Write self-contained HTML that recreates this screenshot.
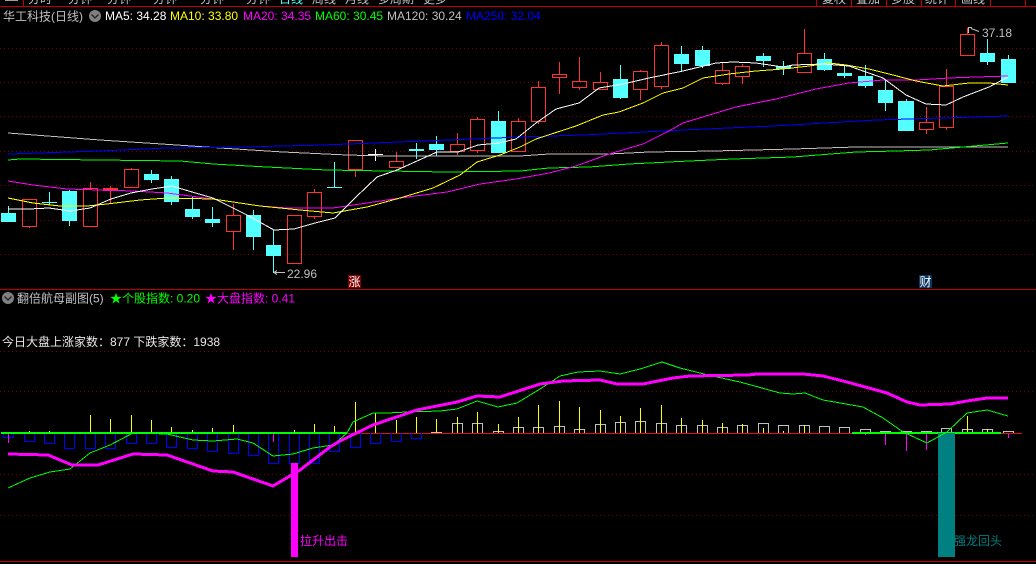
<!DOCTYPE html>
<html lang="zh">
<head>
<meta charset="utf-8">
<title>华工科技</title>
<style>
html,body{margin:0;padding:0;background:#000;width:1036px;height:564px;overflow:hidden}
svg{display:block;position:absolute;left:0;top:0}
text{font-family:"Liberation Sans","WenQuanYi Zen Hei","Noto Sans CJK SC",sans-serif;font-size:12px}
.l{fill:none;shape-rendering:crispEdges}
</style>
</head>
<body>
<svg width="1036" height="564" viewBox="0 0 1036 564" xmlns="http://www.w3.org/2000/svg">
<rect width="1036" height="564" fill="#000"/>

<!-- top tab strip -->
<g fill="#c0c0c0">
<text x="28" y="3">分时</text>
<text x="68" y="3">分钟</text>
<text x="107" y="3">分钟</text>
<text x="153" y="3">分钟</text>
<text x="200" y="3">分钟</text>
<text x="246" y="3">分钟</text>
<text x="279" y="3" fill="#54ffff">日线</text>
<text x="312" y="3">周线</text>
<text x="345" y="3">月线</text>
<text x="378" y="3">多周期</text>
<text x="423" y="3">更多</text>
<text x="822" y="3">复权</text>
<text x="856" y="3">叠加</text>
<text x="891" y="3">多股</text>
<text x="925" y="3">统计</text>
<text x="961" y="3">画线</text>
</g>
<rect x="5" y="0" width="13" height="1" fill="#a0a0a0"/>
<g fill="#c00000">
<rect x="0" y="6" width="1036" height="1"/>
<rect x="23" y="0" width="1" height="6"/>
<rect x="816" y="0" width="1" height="6"/>
<rect x="851" y="0" width="1" height="6"/>
<rect x="886" y="0" width="1" height="6"/>
<rect x="921" y="0" width="1" height="6"/>
<rect x="955" y="0" width="1" height="6"/>
<rect x="990" y="0" width="1" height="6"/>
<rect x="1025" y="0" width="1" height="6"/>
<rect x="0" y="289" width="1036" height="1"/>
<rect x="0" y="561" width="1036" height="1"/>
</g>

<!-- dotted grid -->
<path class="l" stroke="#780000" stroke-dasharray="1 3" d="M0 48.5H1036M0 82.5H1036M0 116.5H1036M0 151.5H1036M0 185.5H1036M0 220.5H1036M0 254.5H1036M0 351.5H1036M0 391.5H1036M0 474.5H1036M0 515.5H1036"/>

<!-- header text -->
<text x="3" y="20.500" fill="#c0c0c0">华工科技(日线)</text>
<circle cx="95" cy="16" r="6" fill="#808080"/>
<path d="M91.500 14.500L95 18L98.500 14.500" fill="none" stroke="#222" stroke-width="1.300"/>
<text x="105" y="20" fill="#ffffff">MA5: 34.28</text>
<text x="170" y="20" fill="#ffff00">MA10: 33.80</text>
<text x="243" y="20" fill="#ff00ff">MA20: 34.35</text>
<text x="315" y="20" fill="#00ff00">MA60: 30.45</text>
<text x="387" y="20" fill="#c0c0c0">MA120: 30.24</text>
<text x="466" y="20" fill="#0000ff">MA250: 32.04</text>

<!-- red candles -->
<path class="l" stroke="#ff3232" d="M22.5 199.5h14v27h-14zM29.5 227V228M83.5 188.5h14v38h-14zM90.5 182V188M110.5 186V204M124.5 169.5h14v18h-14zM131.5 168V169M226.5 215.5h14v16h-14zM233.5 204V215M233.5 232V250M287.5 215.5h14v48h-14zM307.5 192.5h14v24h-14zM314.5 189V192M314.5 217V219M348.5 140.5h14v29h-14zM355.5 170V177M389.5 161.5h14v6h-14zM396.5 152V161M450.5 144.5h14v7h-14zM457.5 133V144M457.5 152V155M470.5 119.5h14v31h-14zM477.5 117V119M477.5 151V153M511.5 121.5h14v30h-14zM518.5 118V121M531.5 87.5h14v34h-14zM538.5 81V87M538.5 122V124M552.5 74.5h14v3h-14zM559.5 62V74M559.5 78V94M572.5 81.5h14v6h-14zM579.5 57V81M579.5 88V90M593.5 82.5h14v7h-14zM600.5 72V82M633.5 71.5h14v18h-14zM640.5 70V71M640.5 90V100M654.5 45.5h14v41h-14zM661.5 42V45M661.5 87V89M715.5 70.5h14v13h-14zM722.5 62V70M722.5 84V85M735.5 66.5h14v10h-14zM742.5 64V66M742.5 77V84M797.5 53.5h14v19h-14zM804.5 29V53M919.5 122.5h14v7h-14zM926.5 107V122M926.5 130V134M939.5 86.5h14v41h-14zM946.5 69V86M946.5 128V130M960.5 34.5h14v21h-14zM967.5 28V34"/>
<rect x="103" y="188" width="15" height="3" fill="#ff3232"/>

<!-- cyan candles -->
<path class="l" stroke="#54ffff" d="M8.5 206V213M49.5 192V205M69.5 190V226M171.5 176V205M151.5 170V183M192.5 196V219M212.5 207V227M253.5 210V250M273.5 230V273M334.5 162V187M416.5 143V159M436.5 136V156M498.5 111V153M620.5 65V99M681.5 46V71M702.5 46V68M763.5 53V67M783.5 61V75M824.5 53V71M844.5 65V78M865.5 65V88M885.5 80V111M906.5 99V131M987.5 39V65M1008.5 55V83"/>
<path fill="#54ffff" d="M1 213h15v9h-15zM42 202h15v1h-15zM62 191h15v30h-15zM144 174h15v6h-15zM164 179h15v23h-15zM185 209h15v8h-15zM205 219h15v4h-15zM246 215h15v22h-15zM266 245h15v11h-15zM327 187h15v1h-15zM409 149h15v2h-15zM429 144h15v6h-15zM491 121h15v32h-15zM613 79h15v19h-15zM674 54h15v10h-15zM695 50h15v16h-15zM756 56h15v5h-15zM776 66h15v3h-15zM817 59h15v11h-15zM837 73h15v3h-15zM858 76h15v10h-15zM878 90h15v13h-15zM898 101h16v30h-16zM980 53h15v9h-15zM1001 59h15v24h-15z"/>
<path class="l" stroke="#ffffff" d="M368 154.5h15M375.5 149V161"/>

<!-- MA lines -->
<polyline class="l" stroke="#c0c0c0" points="8,133 100,140 177,145 220,148 283,152 347,155 387,156 520,156 549,154 609,154 649,152 713,151 793,149 856,147 1008,147"/>
<polyline class="l" stroke="#0000ff" points="8,154 100,151 167,148 243,147 323,145 400,142 520,137 583,135 683,130 773,126 876,120 943,118 1008,116"/>
<polyline class="l" stroke="#00ff00" points="8,160 20,159 180,161 213,164 267,167 327,170 447,172 520,171 549,168 589,167 629,164 689,161 733,159 793,157 856,152 896,151 929,150 963,147 1008,143"/>
<polyline class="l" stroke="#ff00ff" points="8,181 33,185 67,189 133,191 167,193 213,199 260,206 287,208 333,208 367,203 400,198 447,192 480,184 516,179 549,173 576,166 609,154 643,144 669,131 683,123 706,116 736,107 776,99 816,89 849,83 883,80 916,80 949,78 976,77 1008,76"/>
<polyline class="l" stroke="#ffff00" points="8,198 33,203 60,206 87,206 107,204 140,200 167,198 213,199 260,206 300,210 333,213 367,207 400,198 433,188 460,175 477,162 500,155 520,147 536,139 576,126 603,115 619,112 643,103 663,93 683,88 703,78 729,74 756,71 783,69 809,66 829,63 846,65 869,69 893,75 916,81 943,86 969,83 989,83 1008,85"/>
<polyline class="l" stroke="#ffffff" points="8,209 29,209 49,208 70,211 90,208 111,199 131,193 152,189 172,186 192,192 213,198 233,208 247,215 274,230 294,229 315,223 335,218 356,197 377,177 397,170 417,161 437,152 458,152 478,145 499,143 516,139 536,123 556,109 579,103 599,88 623,84 649,78 683,71 716,63 733,62 756,63 783,67 793,65 823,64 849,66 863,71 883,78 906,95 926,104 946,105 963,97 989,87 1008,77"/>

<!-- price labels -->
<path class="l" stroke="#c0c0c0" d="M274 272.5H285M274 272.5l3-2M274 272.5l3 2"/>
<text x="287" y="278" fill="#c0c0c0">22.96</text>
<path d="M968 27.500h4M968.500 27v6M971 28.500L979 31.500" fill="none" stroke="#c0c0c0"/>
<text x="982" y="37" fill="#c0c0c0">37.18</text>

<!-- event marks -->
<rect x="348" y="275" width="13" height="13" fill="#800000"/>
<text x="348.500" y="286" fill="#fff">涨</text>
<rect x="919" y="275" width="13" height="13" fill="#0a3560"/>
<text x="919.500" y="286" fill="#fff">财</text>

<!-- lower panel header -->
<circle cx="8" cy="298" r="6" fill="#808080"/>
<path d="M4.500 296.500L8 300L11.500 296.500" fill="none" stroke="#222" stroke-width="1.300"/>
<text x="17" y="302.500" fill="#c0c0c0">翻倍航母副图(5)</text>
<text x="110" y="302.500" fill="#00ff00">★个股指数: 0.20</text>
<text x="205" y="302.500" fill="#ff00ff">★大盘指数: 0.41</text>
<text x="2" y="346" fill="#e8e8e8">今日大盘上涨家数：877 下跌家数：1938</text>

<!-- zero line -->
<rect x="347" y="433" width="675" height="1" fill="#e01010"/>

<!-- blue boxes -->
<path class="l" stroke="#0000ff" d="M3.500 433V437.500H13.500V433M24.500 433V441.500H34.500V433M44.500 433V443.500H54.500V433M64.500 433V448.500H74.500V433M85.500 433V448.500H95.500V433M105.500 433V448.500H115.500V433M126.500 433V443.500H136.500V433M146.500 433V443.500H156.500V433M166.500 433V447.500H176.500V433M187.500 433V448.500H197.500V433M207.500 433V451.500H217.500V433M228.500 433V453.500H238.500V433M248.500 433V455.500H258.500V433M268.500 433V463.500H278.500V433M289.500 433V463.500H299.500V433M309.500 433V463.500H319.500V433M329.500 433V451.500H339.500V433M350.500 433V447.500H360.500V433M370.500 433V443.500H380.500V433M391.500 433V441.500H401.500V433M411.500 433V438.500H421.500V433"/>

<!-- gray boxes -->
<path class="l" stroke="#c0c0c0" d="M431.500 433V432.500H441.500V433M452.500 433V423.500H462.500V433M472.500 433V423.500H482.500V433M493.500 433V431.500H503.500V433M513.500 433V427.500H523.500V433M533.500 433V427.500H543.500V433M554.500 433V426.500H564.500V433M574.500 433V429.500H584.500V433M595.500 433V424.500H605.500V433M615.500 433V422.500H625.500V433M635.500 433V421.500H645.500V433M656.500 433V423.500H666.500V433M676.500 433V425.500H686.500V433M697.500 433V425.500H707.500V433M717.500 433V427.500H727.500V433M737.500 433V425.500H747.500V433M758.500 433V423.500H768.500V433M778.500 433V425.500H788.500V433M799.500 433V425.500H809.500V433M819.500 433V426.500H829.500V433M839.500 433V427.500H849.500V433M860.500 433V429.500H870.500V433M880.500 433V431.500H890.500V433M901.500 433V431.500H911.500V433M921.500 433V431.500H931.500V433M941.500 433V428.500H951.500V433M962.500 433V429.500H972.500V433M982.500 433V429.500H992.500V433M1003.500 433V431.500H1013.500V433"/>

<!-- yellow spikes -->
<path class="l" stroke="#ffff00" d="M29.500 431V433M49.500 431V433M90.500 415V433M110.500 419V433M131.500 415V433M151.500 420V433M171.500 427V433M192.500 430V433M212.500 428V433M233.500 425V433M294.500 430V433M314.500 424V433M334.500 426V433M355.500 402V433M375.500 413V433M396.500 420V433M416.500 417V433M436.500 419V433M457.500 417V433M477.500 412V433M498.500 424V433M518.500 417V433M538.500 405V433M559.500 401V433M579.500 407V433M600.500 410V433M620.500 416V433M640.500 408V433M661.500 405V433M681.500 418V433M702.500 420V433M722.500 423V433M742.500 424V433M763.500 428V433M783.500 431V433M804.500 425V433M967.500 416V433M987.500 429V433"/>

<!-- magenta spikes -->
<path class="l" stroke="#ff00ff" d="M8.500 434V443M273.500 434V442M865.500 434V435M885.500 434V445M906.500 434V451M926.500 434V450M1008.500 434V438"/>

<!-- green thick zero -->
<rect x="1" y="432" width="346" height="2" fill="#00ff00"/>
<rect x="852" y="432" width="149" height="2" fill="#00ff00"/>

<!-- signal bars -->
<rect x="938" y="433" width="17" height="124" fill="#008080"/>
<rect x="291" y="463" width="7" height="94" fill="#ff00ff"/>
<text x="300" y="545" fill="#ff00ff">拉升出击</text>
<text x="954" y="545" fill="#008080">强龙回头</text>

<!-- oscillator lines -->
<polyline class="l" stroke="#00ff00" points="8,488 30,478 50,472 70,469 90,453 110,445 133,433 167,434 193,440 213,441 237,439 253,443 273,456 293,454 313,448 333,445 347,433 353,422 373,413 387,413 407,412 440,411 457,409 477,401 498,407 517,403 540,389 560,376 578,372 600,371 620,374 640,369 662,362 680,368 708,375 740,382 780,393 793,394 805,393 823,400 863,407 883,418 903,432 927,443 947,432 967,413 987,410 1008,416"/>
<polyline class="l" stroke="#ff00ff" stroke-width="3" points="8,454 48,455 72,465 98,465 133,454 167,455 213,471 233,472 273,486 300,470 330,447 340,441 373,425 417,410 457,402 477,396 500,397 540,384 563,381 600,380 617,384 643,384 673,378 690,376 748,375 757,374 803,374 823,376 847,382 887,393 907,402 920,405 950,404 967,401 987,398 1008,398"/>
</svg>
</body>
</html>
